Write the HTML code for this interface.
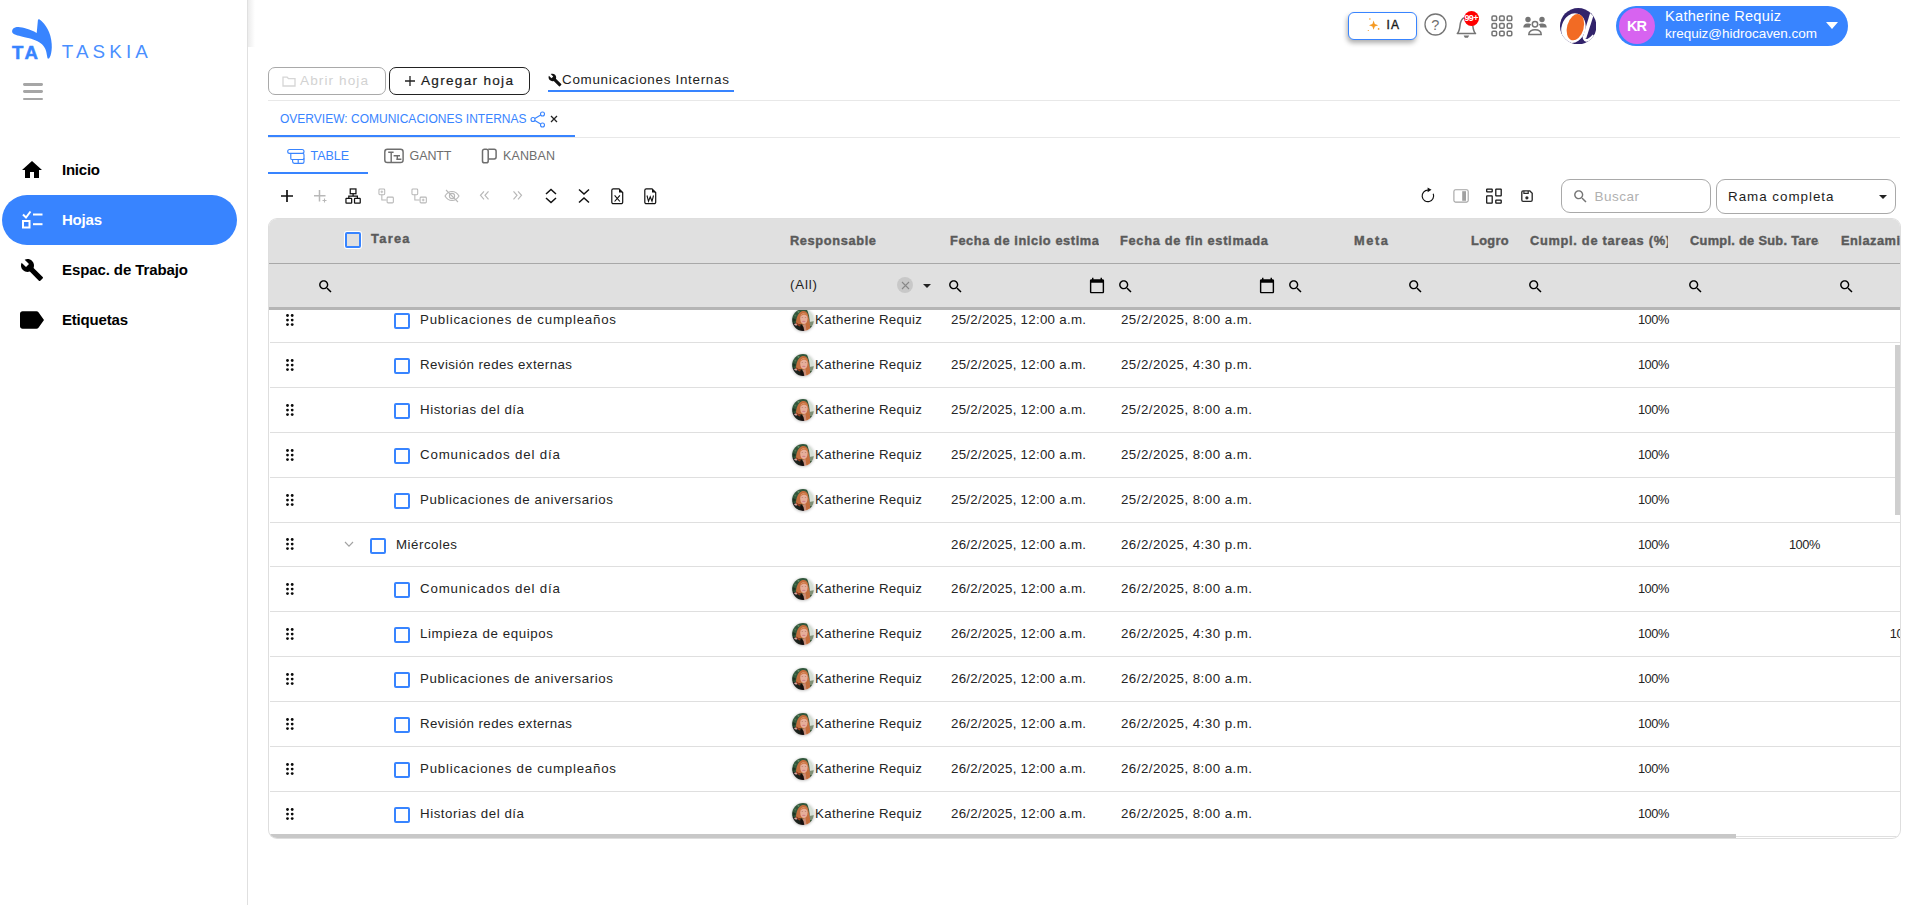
<!DOCTYPE html>
<html lang="es"><head><meta charset="utf-8"><title>Taskia</title>
<style>
html,body{margin:0;padding:0;}
body{width:1919px;height:905px;position:relative;overflow:hidden;background:#fff;font-family:"Liberation Sans",sans-serif;}
.a{position:absolute;display:block;}
.t{position:absolute;white-space:pre;font-family:"Liberation Sans",sans-serif;}
.b{position:absolute;box-sizing:border-box;}

</style></head>
<body>
<div class="b" style="left:0;top:0;width:248px;height:905px;background:#fff;border-right:1px solid #e0e0e0;"></div>
<div class="b" style="left:248px;top:0;width:7px;height:47px;background:linear-gradient(to right,#ececec,#fff)"></div>
<svg class="a" style="left:0.00px;top:0.00px;" width="64" height="64" viewBox="0 0 64 64"><path d="M12.1 31.5 C12.1 28.5 15 27 18.3 27.1 C23 27.2 30 29.5 36.7 32.9 L37.9 20.3 C38 19.2 38.8 19 39.600 19.5 C44 22.5 47.5 28 49.2 32.5 C51 37 52 43 51.8 47.5 C51.6 52 50.8 55.5 50 56.7 C49.5 58 48.8 58.8 48 58.6 C47.3 58.300 47 55 46.25 51.7 C45.5 49 44.5 47.5 43.3 45.8 C41.5 43.5 40 42.5 37.5 41.25 C34 39.7 32 39.2 29.2 38.3 C26 37.4 23 36.9 20.8 36.25 C18.5 35.7 16.5 35.3 15 34.6 C13.3 33.8 12.1 33 12.1 31.5 Z" fill="#3884ff"/></svg>
<span class="t " style="top:41.74px;font-size:18.6px;line-height:22.32px;color:#3884ff;left:12.10px;font-weight:700;letter-spacing:2.386px;-webkit-text-stroke:0.5px #3884ff;">TA</span>
<span class="t " style="top:41.42px;font-size:18.8px;line-height:22.56px;color:#4a8fff;left:61.80px;letter-spacing:4.106px;">TASKIA</span>
<div class="b" style="left:23px;top:83.2px;width:20px;height:2.900px;background:#a6a6a6;border-radius:1.45px"></div>
<div class="b" style="left:23px;top:90.35px;width:20px;height:2.900px;background:#a6a6a6;border-radius:1.45px"></div>
<div class="b" style="left:23px;top:97.5px;width:20px;height:2.900px;background:#a6a6a6;border-radius:1.45px"></div>
<div class="b" style="left:2px;top:195px;width:235px;height:50px;background:#3884ff;border-radius:25px"></div>
<svg class="a" style="left:20.00px;top:158.00px;" width="24" height="24" viewBox="0 0 24 24"><path d="M10 20v-6h4v6h5v-8h3L12 3 2 12h3v8z" fill="#000"/></svg>
<span class="t " style="top:161.00px;font-size:15px;line-height:18.00px;color:#000;left:62.00px;font-weight:700;letter-spacing:-0.234px;">Inicio</span>
<svg class="a" style="left:21.00px;top:208.00px;" width="22" height="22" viewBox="0 0 22 22"><path d="M2 6.5 L5 9.5 L9.5 3.5" fill="none" stroke="#fff" stroke-width="2"/><rect x="2" y="13" width="6.5" height="6.5" fill="none" stroke="#fff" stroke-width="2"/><rect x="12" y="5.5" width="9.5" height="2" fill="#fff"/><rect x="12" y="15.2" width="9.5" height="2" fill="#fff"/></svg>
<span class="t " style="top:211.00px;font-size:15px;line-height:18.00px;color:#fff;left:62.00px;font-weight:700;letter-spacing:-0.212px;">Hojas</span>
<svg class="a" style="left:20.00px;top:258.00px;" width="24" height="24" viewBox="0 0 24 24"><path d="M22.7 19l-9.1-9.1c.9-2.3.4-5-1.5-6.9-2-2-5-2.4-7.4-1.3L9 6 6 9 1.6 4.7C.4 7.1.9 10.1 2.9 12.1c1.9 1.9 4.6 2.4 6.9 1.5l9.1 9.1c.4.4 1 .4 1.4 0l2.3-2.3c.5-.4.5-1.1.1-1.4z" fill="#000"/></svg>
<span class="t " style="top:261.00px;font-size:15px;line-height:18.00px;color:#000;left:62.00px;font-weight:700;letter-spacing:-0.097px;">Espac. de Trabajo</span>
<svg class="a" style="left:19.90px;top:311.00px;" width="24" height="18" viewBox="3 5 19 14"><path d="M17.63 5.84C17.27 5.33 16.67 5 16 5L5 5.01C3.9 5.01 3 5.9 3 7v10c0 1.1.9 1.99 2 1.99L16 19c.67 0 1.27-.33 1.63-.84L22 12l-4.37-6.16z" fill="#000"/></svg>
<span class="t " style="top:311.00px;font-size:15px;line-height:18.00px;color:#000;left:62.00px;font-weight:700;letter-spacing:-0.189px;">Etiquetas</span>
<div class="b" style="left:1348.3px;top:12px;width:68.5px;height:27.5px;border:1.5px solid #3884ff;border-radius:6px;background:#fff;box-shadow:-1px 3px 5px rgba(0,0,0,.32)"></div>
<svg class="a" style="left:1366.00px;top:17.00px;" width="15" height="16" viewBox="0 0 15 16"><path d="M7.6 3.600 L8.8 7 L12.200 8.2 L8.8 9.4 L7.6 12.8 L6.4 9.4 L3 8.2 L6.4 7 Z" fill="#f59a23"/><circle cx="3.900" cy="1.900" r=".75" fill="#f59a23"/><circle cx="12.6" cy="11.900" r=".85" fill="#f59a23"/><circle cx="2.3" cy="13.500" r=".6" fill="#f59a23"/></svg>
<span class="t " style="top:18.30px;font-size:12px;line-height:14.40px;color:#1a1a1a;left:1386.60px;letter-spacing:0.962px;-webkit-text-stroke:0.35px #1a1a1a;">IA</span>
<svg class="a" style="left:1423.90px;top:13.20px;" width="23" height="23" viewBox="0 0 23 23"><circle cx="11.500" cy="11.5" r="10.5" fill="none" stroke="#757575" stroke-width="1.3"/></svg>
<span class="t " style="top:16.50px;font-size:14.5px;line-height:17.40px;color:#707070;left:1431.30px;">?</span>
<svg class="a" style="left:1455.00px;top:14.00px;" width="24" height="26" viewBox="0 0 24 26"><path d="M2.300 19.6 C5.2 16.5 4.6 12 5.5 8.800 C6.3 5.8 8.3 3.300 11.4 3.300 C14.500 3.3 16.500 5.800 17.300 8.8 C18.200 12 17.600 16.5 20.500 19.600 Z" fill="none" stroke="#757575" stroke-width="1.5" stroke-linejoin="round"/><path d="M8.6 21.600 h5.600 l-1.300 2.200 h-3 z" fill="#757575"/></svg>
<div class="b" style="left:1464px;top:11px;width:15px;height:15px;border-radius:50%;background:#f00"></div>
<span class="t " style="top:12.60px;font-size:9px;line-height:10.80px;color:#fff;left:1464.50px;font-weight:700;letter-spacing:-0.633px;">99+</span>
<svg class="a" style="left:1490.50px;top:14.50px;" width="22" height="22" viewBox="0 0 22 22"><rect x="1.0" y="1.0" width="4.6" height="4.6" rx="1.2" fill="none" stroke="#757575" stroke-width="1.5"/><rect x="8.6" y="1.0" width="4.6" height="4.6" rx="1.2" fill="none" stroke="#757575" stroke-width="1.5"/><rect x="16.2" y="1.0" width="4.6" height="4.6" rx="1.2" fill="none" stroke="#757575" stroke-width="1.5"/><rect x="1.0" y="8.6" width="4.6" height="4.6" rx="1.2" fill="none" stroke="#757575" stroke-width="1.5"/><rect x="8.6" y="8.6" width="4.6" height="4.6" rx="1.2" fill="none" stroke="#757575" stroke-width="1.5"/><rect x="16.2" y="8.6" width="4.6" height="4.6" rx="1.2" fill="none" stroke="#757575" stroke-width="1.5"/><rect x="1.0" y="16.2" width="4.6" height="4.6" rx="1.2" fill="none" stroke="#757575" stroke-width="1.5"/><rect x="8.6" y="16.2" width="4.6" height="4.6" rx="1.2" fill="none" stroke="#757575" stroke-width="1.5"/><rect x="16.2" y="16.2" width="4.6" height="4.6" rx="1.2" fill="none" stroke="#757575" stroke-width="1.5"/></svg>
<svg class="a" style="left:1522.00px;top:14.00px;" width="26" height="23" viewBox="0 0 26 23"><circle cx="6" cy="5.5" r="2.700" fill="#757575"/><circle cx="20" cy="5.5" r="2.700" fill="#757575"/><path d="M1.300 13.5 C1.3 10.500 3.5 9.6 6 9.6 C7.500 9.6 8.600 10 9.2 10.6 C8.200 11.400 7.8 12.5 7.8 13.5 Z" fill="#757575"/><path d="M24.700 13.5 C24.7 10.500 22.5 9.600 20 9.6 C18.500 9.6 17.400 10 16.800 10.6 C17.800 11.400 18.200 12.5 18.2 13.5 Z" fill="#757575"/><circle cx="13" cy="10.300" r="2.700" fill="none" stroke="#757575" stroke-width="1.5"/><path d="M6.800 20.500 C6.800 17 10 15.700 13 15.700 C16 15.700 19.200 17 19.200 20.500 Z" fill="none" stroke="#757575" stroke-width="1.5"/></svg>
<svg class="a" style="left:1559.80px;top:7.80px;" width="36.4" height="36.4" viewBox="0 0 36 36"><defs><clipPath id="cc"><circle cx="18" cy="18" r="18"/></clipPath></defs><g clip-path="url(#cc)"><rect width="36" height="36" fill="#32236b"/><ellipse cx="13.300" cy="19.900" rx="11.800" ry="14.900" transform="rotate(17 13.3 19.9)" fill="#fff"/><path d="M29.800 5 L33 7.800 L25.800 30.400 L22.800 28 Z" fill="#fff"/><path d="M23.4 27.500 C23.6 31.5 25.5 33.200 28.500 31.3 C30.5 30 32 28.6 33.4 27" fill="none" stroke="#fff" stroke-width="2.6"/><ellipse cx="15.2" cy="18.95" rx="8.2" ry="13.35" transform="rotate(15.6 15.2 18.95)" fill="#f26b24"/></g></svg>
<div class="b" style="left:1616px;top:5.800px;width:232px;height:40px;border-radius:20px;background:#3884ff"></div>
<div class="b" style="left:1619px;top:8px;width:36px;height:36px;border-radius:50%;background:#d763f0"></div>
<span class="t " style="top:17.80px;font-size:14.5px;line-height:17.40px;color:#fff;left:1627.00px;font-weight:700;letter-spacing:-0.943px;">KR</span>
<span class="t " style="top:8.34px;font-size:14.6px;line-height:17.52px;color:#fff;left:1665.00px;letter-spacing:0.266px;">Katherine Requiz</span>
<span class="t " style="top:25.90px;font-size:13.5px;line-height:16.20px;color:#fff;left:1665.00px;letter-spacing:-0.025px;">krequiz@hidrocaven.com</span>
<svg class="a" style="left:1826.00px;top:22.00px;" width="12" height="7" viewBox="0 0 12 7"><path d="M0 0 L12 0 L6 7 Z" fill="#fff"/></svg>
<div class="b" style="left:268px;top:67px;width:118px;height:28px;border:1px solid #a9a9a9;border-radius:7px;background:#fff"></div>
<svg class="a" style="left:282.00px;top:75.00px;" width="14" height="12" viewBox="0 0 14 12"><path d="M1 2.2 h4.2 l1.3 1.5 h6.5 v7.3 h-12 z" fill="none" stroke="#d6d6d6" stroke-width="1.3"/></svg>
<span class="t " style="top:72.84px;font-size:13.6px;line-height:16.32px;color:#d2d2d2;left:300.00px;letter-spacing:1.088px;">Abrir hoja</span>
<div class="b" style="left:389px;top:67px;width:141px;height:28px;border:1px solid #222;border-radius:7px;background:#fff"></div>
<svg class="a" style="left:404.00px;top:75.00px;" width="12" height="12" viewBox="0 0 12 12"><path d="M6 1 v10 M1 6 h10" stroke="#222" stroke-width="1.3" fill="none"/></svg>
<span class="t " style="top:72.84px;font-size:13.6px;line-height:16.32px;color:#1c1c1c;left:421.00px;letter-spacing:1.284px;-webkit-text-stroke:0.2px #1c1c1c;">Agregar hoja</span>
<svg class="a" style="left:548.00px;top:73.00px;" width="14" height="14" viewBox="0 0 24 24"><path d="M22.7 19l-9.1-9.1c.9-2.3.4-5-1.5-6.9-2-2-5-2.4-7.4-1.3L9 6 6 9 1.6 4.7C.4 7.1.9 10.1 2.9 12.1c1.9 1.9 4.6 2.4 6.9 1.5l9.1 9.1c.4.4 1 .4 1.4 0l2.3-2.3c.5-.4.5-1.1.1-1.4z" fill="#111"/></svg>
<span class="t " style="top:71.56px;font-size:13.4px;line-height:16.08px;color:#222;left:562.00px;letter-spacing:0.718px;">Comunicaciones Internas</span>
<div class="b" style="left:548px;top:90px;width:186px;height:2px;background:#3884ff"></div>
<div class="b" style="left:268px;top:100px;width:1632px;height:1px;background:#e8e8e8"></div>
<span class="t " style="top:112.30px;font-size:12px;line-height:14.40px;color:#3884ff;left:280.00px;letter-spacing:0.008px;">OVERVIEW: COMUNICACIONES INTERNAS</span>
<svg class="a" style="left:529.10px;top:109.50px;" width="18" height="18" viewBox="0 0 18 18"><circle cx="13.5" cy="4" r="2" fill="none" stroke="#3884ff" stroke-width="1.1"/><circle cx="4" cy="9.5" r="2" fill="none" stroke="#3884ff" stroke-width="1.1"/><circle cx="13.5" cy="15" r="2" fill="none" stroke="#3884ff" stroke-width="1.1"/><path d="M5.8 8.5 L11.7 5 M5.8 10.5 L11.7 14" stroke="#3884ff" stroke-width="1.1"/></svg>
<svg class="a" style="left:550.40px;top:115.00px;" width="8" height="8" viewBox="0 0 8 8"><path d="M1 1 L7 7 M7 1 L1 7" stroke="#222" stroke-width="1.3"/></svg>
<div class="b" style="left:268px;top:137px;width:1632px;height:1px;background:#e8e8e8"></div>
<div class="b" style="left:268px;top:135px;width:307px;height:2px;background:#3884ff"></div>
<svg class="a" style="left:285.00px;top:146.00px;" width="22" height="20" viewBox="0 0 22 20"><rect x="2.70" y="3.50" width="16.3" height="3.9" rx="1.95" fill="none" stroke="#3884ff" stroke-width="1.15"/><path d="M5.80 7.40 V159.3 h0" fill="none"/><path d="M5.80 7.40 L5.80 12.40 Q5.80 13.50 7.00 13.50 L17.60 13.50 Q19.00 13.50 19.00 12.20 L19.00 8.80 Q19.00 7.40 17.60 7.40" fill="none" stroke="#3884ff" stroke-width="1.15"/><path d="M7.60 13.50 L7.60 15.60 Q7.60 17.30 9.30 17.30 L17.40 17.30 Q19.00 17.30 19.00 15.70 L19.00 12.20 M13.20 13.50 L13.20 17.30" fill="none" stroke="#3884ff" stroke-width="1.15"/></svg>
<span class="t " style="top:148.50px;font-size:12.5px;line-height:15.00px;color:#3884ff;left:310.50px;letter-spacing:-0.043px;">TABLE</span>
<div class="b" style="left:268px;top:171.6px;width:100px;height:2.300px;background:#3884ff"></div>
<svg class="a" style="left:382.00px;top:146.00px;" width="24" height="20" viewBox="0 0 24 20"><rect x="2.80" y="3.30" width="18.3" height="13.2" rx="2.6" fill="none" stroke="#6e6e6e" stroke-width="1.45"/><path d="M9.20 6.00 V16.5 M6.20 6.20 H11.60 M11.60 9.70 H18 M15.30 9.70 V13.30 M14.30 13.30 H19.40" fill="none" stroke="#6e6e6e" stroke-width="1.4"/></svg>
<span class="t " style="top:148.50px;font-size:12.5px;line-height:15.00px;color:#6e6e6e;left:409.50px;letter-spacing:-0.090px;">GANTT</span>
<svg class="a" style="left:480.00px;top:146.00px;" width="20" height="20" viewBox="0 0 20 20"><rect x="2.50" y="3.30" width="5.700" height="13.500" rx="1.900" fill="none" stroke="#6e6e6e" stroke-width="1.5"/><path d="M8.20 3.30 H14.20 a1.900 1.900 0 0 1 1.900 1.900 v5.800 a1.900 1.900 0 0 1 -1.900 1.900 H8.20" fill="none" stroke="#6e6e6e" stroke-width="1.5"/></svg>
<span class="t " style="top:148.50px;font-size:12.5px;line-height:15.00px;color:#6e6e6e;left:503.00px;letter-spacing:0.119px;">KANBAN</span>
<svg class="a" style="left:280.00px;top:189.00px;" width="14" height="14" viewBox="0 0 14 14"><path d="M7 1 v12 M1 7 h12" stroke="#111" stroke-width="1.7" fill="none"/></svg>
<svg class="a" style="left:313.00px;top:189.00px;" width="15" height="15" viewBox="0 0 15 15"><path d="M6.5 1 v11.500 M1 6.700 h11.500" stroke="#b8b8b8" stroke-width="1.5" fill="none"/><path d="M11.5 9.5 v4 M9.5 11.5 h4" stroke="#b8b8b8" stroke-width="1.1"/></svg>
<svg class="a" style="left:344.70px;top:187.80px;" width="16.2" height="16.2" viewBox="0 0 17 17"><rect x="5.5" y="1" width="6" height="5" fill="none" stroke="#111" stroke-width="1.3"/><rect x="1" y="11" width="6" height="5" rx=".5" fill="none" stroke="#111" stroke-width="1.3"/><rect x="10" y="11" width="6" height="5" rx=".5" fill="none" stroke="#111" stroke-width="1.3"/><path d="M8.5 6 v2.5 M4 11 v-2.5 h9 v2.5" fill="none" stroke="#111" stroke-width="1.3"/></svg>
<svg class="a" style="left:378.00px;top:188.00px;" width="16.3" height="16.3" viewBox="0 0 17 17"><rect x="1" y="1" width="6" height="6" rx="1" fill="none" stroke="#b8b8b8" stroke-width="1.1"/><path d="M4 2.6 v2.8 M2.6 4 h2.8" stroke="#b8b8b8" stroke-width="1"/><path d="M4 7 v5.5 h5" fill="none" stroke="#b8b8b8" stroke-width="1.1"/><rect x="9.5" y="9.5" width="6.5" height="6" rx="1" fill="none" stroke="#b8b8b8" stroke-width="1.1"/></svg>
<svg class="a" style="left:411.00px;top:188.00px;" width="16.3" height="16.3" viewBox="0 0 17 17"><rect x="1" y="1" width="6" height="6" rx="1" fill="none" stroke="#b8b8b8" stroke-width="1.1"/><path d="M12.7 11.1 v2.8 M11.3 12.5 h2.8" stroke="#b8b8b8" stroke-width="1"/><path d="M4 7 v5.5 h5" fill="none" stroke="#b8b8b8" stroke-width="1.1"/><rect x="9.5" y="9.5" width="6.5" height="6" rx="1" fill="none" stroke="#b8b8b8" stroke-width="1.1"/></svg>
<svg class="a" style="left:444.00px;top:189.00px;" width="16" height="14" viewBox="0 0 16 14"><path d="M1 7 C3 3.5 5.5 2.5 8 2.5 C10.5 2.5 13 3.5 15 7 C13 10.5 10.5 11.5 8 11.5 C5.5 11.5 3 10.5 1 7 Z" fill="none" stroke="#b8b8b8" stroke-width="1.1"/><circle cx="8" cy="7" r="2.6" fill="none" stroke="#b8b8b8" stroke-width="1.1"/><path d="M2 1 L14 13" stroke="#b8b8b8" stroke-width="1.1"/></svg>
<svg class="a" style="left:479.00px;top:190.40px;" width="11" height="10.6" viewBox="0 0 11 10"><path d="M5 1 L1.5 5 L5 9 M9.5 1 L6 5 L9.5 9" fill="none" stroke="#b8b8b8" stroke-width="1.2"/></svg>
<svg class="a" style="left:512.00px;top:190.40px;" width="11" height="10.6" viewBox="0 0 11 10"><path d="M1.5 1 L5 5 L1.5 9 M6 1 L9.5 5 L6 9" fill="none" stroke="#b8b8b8" stroke-width="1.2"/></svg>
<svg class="a" style="left:544.00px;top:187.80px;" width="14" height="16" viewBox="0 0 14 16"><path d="M2 6 L7 1.5 L12 6 M2 10 L7 14.5 L12 10" fill="none" stroke="#111" stroke-width="1.5"/></svg>
<svg class="a" style="left:577.00px;top:187.60px;" width="14" height="16" viewBox="0 0 14 16"><path d="M2 1.5 L7 6 L12 1.5 M2 14.5 L7 10 L12 14.5" fill="none" stroke="#111" stroke-width="1.5"/></svg>
<svg class="a" style="left:610.60px;top:187.50px;" width="13" height="17" viewBox="0 0 13 17"><path d="M2.300 .8 h5.700 l3.700 3.700 v9.700 a1.500 1.500 0 0 1 -1.500 1.500 h-7.900 a1.500 1.500 0 0 1 -1.500 -1.500 v-11.900 a1.500 1.500 0 0 1 1.500 -1.500 z" fill="none" stroke="#111" stroke-width="1.2"/><path d="M8 .8 v3.700 h3.700 z" fill="#111"/><path d="M3.600 7.300 L8.900 13.500 M8.900 7.300 L3.600 13.500" stroke="#111" stroke-width="1.15"/></svg>
<svg class="a" style="left:644.30px;top:187.50px;" width="13" height="17" viewBox="0 0 13 17"><path d="M2.300 .8 h5.700 l3.700 3.700 v9.700 a1.500 1.500 0 0 1 -1.500 1.500 h-7.900 a1.500 1.500 0 0 1 -1.500 -1.500 v-11.900 a1.500 1.500 0 0 1 1.500 -1.500 z" fill="none" stroke="#111" stroke-width="1.2"/><path d="M8 .8 v3.700 h3.700 z" fill="#111"/><path d="M3 7.500 L4.500 13.300 L6.250 8.800 L8 13.300 L9.500 7.500" fill="none" stroke="#111" stroke-width="1.1"/></svg>
<svg class="a" style="left:1415.00px;top:183.00px;" width="125" height="27" viewBox="0 0 125 27"><path d="M12.90 7.15 A5.75 5.75 0 1 0 18.23 10.75" fill="none" stroke="#111" stroke-width="1.15"/><path d="M12.60 4.50 L16.50 6.85 L12.60 9.20 Z" fill="#111"/><rect x="38.90000000000009" y="6.80" width="14.3" height="12.3" rx="1.6" fill="none" stroke="#a3a3a3" stroke-width="1.1"/><rect x="47.20" y="8.20" width="3.8" height="9.6" fill="#a0a0a0"/><rect x="71.70" y="6.00" width="5.50" height="2.90" rx=".35" fill="none" stroke="#111" stroke-width="1.25"/><rect x="71.70" y="12.90" width="5.50" height="7.20" rx=".35" fill="none" stroke="#111" stroke-width="1.25"/><rect x="80.80" y="6.00" width="5.40" height="6.80" rx=".35" fill="none" stroke="#111" stroke-width="1.25"/><rect x="80.80" y="17.10" width="5.40" height="3.00" rx=".35" fill="none" stroke="#111" stroke-width="1.25"/><path d="M106.80 9.20 a1.3 1.3 0 0 1 1.3 -1.3 h6.8 l2.300 2.300 v6.800 a1.300 1.3 0 0 1 -1.300 1.300 h-7.800 a1.300 1.3 0 0 1 -1.300 -1.300 z" fill="none" stroke="#2a2a2a" stroke-width="1.35"/><path d="M108.90 7.90 v2.400 h4.300 v-2.400" fill="none" stroke="#2a2a2a" stroke-width="1.2"/><circle cx="111.90" cy="14.80" r="1.6" fill="#2a2a2a"/></svg>
<div class="b" style="left:1561px;top:179px;width:150px;height:34px;border:1px solid #a9a9a9;border-radius:9px;background:#fff"></div>
<svg class="a" style="left:1572.30px;top:188.00px;" width="17" height="17" viewBox="0 0 24 24"><path d="M15.5 14h-.79l-.28-.27C15.41 12.59 16 11.11 16 9.5 16 5.91 13.09 3 9.5 3S3 5.910 3 9.5 5.91 16 9.5 16c1.61 0 3.09-.59 4.23-1.57l.27.28v.79l5 4.99L20.49 19l-4.99-5zm-6 0C7.01 14 5 11.99 5 9.5S7.01 5 9.5 5 14 7.01 14 9.5 11.990 14 9.5 14z" fill="#757575"/></svg>
<span class="t " style="top:188.60px;font-size:13.5px;line-height:16.20px;color:#b0b0b0;left:1594.50px;letter-spacing:0.497px;">Buscar</span>
<div class="b" style="left:1716px;top:179px;width:180px;height:35px;border:1px solid #a9a9a9;border-radius:9px;background:#fff"></div>
<span class="t " style="top:188.76px;font-size:13.4px;line-height:16.08px;color:#1e1e1e;left:1728.00px;letter-spacing:0.972px;">Rama completa</span>
<svg class="a" style="left:1879.00px;top:195.00px;" width="8" height="4" viewBox="0 0 8 4"><path d="M0 0 h8 l-4 4 z" fill="#222"/></svg>
<div class="b" style="left:269px;top:219px;width:1631px;height:619px;border-radius:8px;background:#fff;box-shadow:0 0 0 1px #dedede;overflow:hidden" id="tbl">
<svg width="0" height="0" style="position:absolute"><defs><clipPath id="avc"><circle cx="11" cy="11" r="10.9"/></clipPath><filter id="avb" x="-10%" y="-10%" width="120%" height="120%"><feGaussianBlur stdDeviation="0.45"/></filter><g id="avatar"><g clip-path="url(#avc)"><g filter="url(#avb)"><rect x="-2" y="-2" width="26" height="26" fill="#33573a"/><path d="M-1 6 L6 -1 L-1 -1 Z" fill="#1c3523"/><path d="M0 9 C2 8 3 11 2 14 L-1 14 Z" fill="#213b28"/><circle cx="6.500" cy="2.800" r="1.100" fill="#5f8a66"/><circle cx="3.300" cy="6.500" r="1" fill="#4a7552"/><circle cx="2.500" cy="11" r="1.200" fill="#1b3021"/><path d="M14 -1 L23 -1 L23 15 L17.500 15 C18 9 17 4 14 -1 Z" fill="#d6dfd6"/><path d="M17 13 L23 12 L23 17 L18 17 Z" fill="#7e8f74"/><path d="M-1 14 C3 13.500 8 14.500 11 17.500 L14 23 L-1 23 Z" fill="#1b211e"/><path d="M2 15 C3.5 14 5 14.500 5.500 16 C4.500 17 3 16.800 2 15 Z" fill="#d9a7a4"/><path d="M3.900 14.800 C4.200 9 5.800 4 9.800 2.200 C13 1.300 15.600 3 16.300 7 C17 11 18.300 15 18.300 19.500 L16 22 L13.500 22 L12 16 L8 15 L5.500 15.800 Z" fill="#c46d3c"/><path d="M4.200 13 C5 14 7 15.500 9 15.800 L8 17.500 C6 17 4.500 15.500 4.200 13 Z" fill="#8c3a1e"/><path d="M10.500 16 L13.500 15 L14.500 22 L11.500 22 Z" fill="#c98d78"/><path d="M9 15 L11.500 18 L12.500 23 L8 23 Z" fill="#14110f"/><ellipse cx="11.900" cy="9.500" rx="3.700" ry="5.500" fill="#e6ae9a"/><path d="M8.300 8 C9 5.200 11 4 13.300 4.300 C15 4.600 15.800 6.500 15.700 8.500 C15 6.500 13.800 5.600 12 5.700 C10.300 5.800 9 6.800 8.300 8 Z" fill="#cf7a47"/><ellipse cx="11.800" cy="12.400" rx="1.700" ry=".7" fill="#d2808a"/><ellipse cx="10.300" cy="8.700" rx=".8" ry=".4" fill="#a87562"/><ellipse cx="13.500" cy="8.700" rx=".8" ry=".4" fill="#a87562"/></g></g></g></defs></svg>
<div class="b" style="left:1px;top:122.90px;width:1631px;height:1px;background:#dfdfdf"></div>
<svg class="a" style="left:17.26px;top:94.70px;" width="7.7" height="12.1" viewBox="0 0 7.7 12.1"><circle cx="1.50" cy="1.50" r="1.4" fill="#0a0a0a"/><circle cx="6.20" cy="1.50" r="1.4" fill="#0a0a0a"/><circle cx="1.50" cy="6.05" r="1.4" fill="#0a0a0a"/><circle cx="6.20" cy="6.05" r="1.4" fill="#0a0a0a"/><circle cx="1.50" cy="10.60" r="1.4" fill="#0a0a0a"/><circle cx="6.20" cy="10.60" r="1.4" fill="#0a0a0a"/></svg>
<div class="b" style="left:125px;top:94.00px;width:16px;height:16px;border:2px solid #3884ff;border-radius:2px;background:#fff"></div>
<span class="t" style="top:93.16px;font-size:13.3px;line-height:15.96px;color:#242424;left:151.00px;letter-spacing:0.771px;">Publicaciones de cumpleaños</span>
<div class="b" style="left:523px;top:90.30px;width:22px;height:22px;border-radius:50%;box-shadow:0 0.5px 3px rgba(0,0,0,.3)"></div>
<svg class="a" style="left:523.00px;top:90.30px;" width="22" height="22" viewBox="0 0 22 22"><use href="#avatar"/></svg>
<span class="t" style="top:93.16px;font-size:13.3px;line-height:15.96px;color:#242424;left:546.00px;letter-spacing:0.331px;">Katherine Requiz</span>
<span class="t" style="top:93.16px;font-size:13.3px;line-height:15.96px;color:#242424;left:682.00px;letter-spacing:0.280px;">25/2/2025, 12:00 a.m.</span>
<span class="t" style="top:93.16px;font-size:13.3px;line-height:15.96px;color:#242424;left:852.00px;letter-spacing:0.473px;">25/2/2025, 8:00 a.m.</span>
<span class="t" style="top:93.13px;font-size:12.8px;line-height:15.36px;color:#242424;right:231.20px;letter-spacing:-0.479px;">100%</span>
<div class="b" style="left:1px;top:167.90px;width:1631px;height:1px;background:#dfdfdf"></div>
<svg class="a" style="left:17.26px;top:139.70px;" width="7.7" height="12.1" viewBox="0 0 7.7 12.1"><circle cx="1.50" cy="1.50" r="1.4" fill="#0a0a0a"/><circle cx="6.20" cy="1.50" r="1.4" fill="#0a0a0a"/><circle cx="1.50" cy="6.05" r="1.4" fill="#0a0a0a"/><circle cx="6.20" cy="6.05" r="1.4" fill="#0a0a0a"/><circle cx="1.50" cy="10.60" r="1.4" fill="#0a0a0a"/><circle cx="6.20" cy="10.60" r="1.4" fill="#0a0a0a"/></svg>
<div class="b" style="left:125px;top:139.00px;width:16px;height:16px;border:2px solid #3884ff;border-radius:2px;background:#fff"></div>
<span class="t" style="top:138.16px;font-size:13.3px;line-height:15.96px;color:#242424;left:151.00px;letter-spacing:0.424px;">Revisión redes externas</span>
<div class="b" style="left:523px;top:135.30px;width:22px;height:22px;border-radius:50%;box-shadow:0 0.5px 3px rgba(0,0,0,.3)"></div>
<svg class="a" style="left:523.00px;top:135.30px;" width="22" height="22" viewBox="0 0 22 22"><use href="#avatar"/></svg>
<span class="t" style="top:138.16px;font-size:13.3px;line-height:15.96px;color:#242424;left:546.00px;letter-spacing:0.331px;">Katherine Requiz</span>
<span class="t" style="top:138.16px;font-size:13.3px;line-height:15.96px;color:#242424;left:682.00px;letter-spacing:0.280px;">25/2/2025, 12:00 a.m.</span>
<span class="t" style="top:138.16px;font-size:13.3px;line-height:15.96px;color:#242424;left:852.00px;letter-spacing:0.473px;">25/2/2025, 4:30 p.m.</span>
<span class="t" style="top:138.13px;font-size:12.8px;line-height:15.36px;color:#242424;right:231.20px;letter-spacing:-0.479px;">100%</span>
<div class="b" style="left:1px;top:212.90px;width:1631px;height:1px;background:#dfdfdf"></div>
<svg class="a" style="left:17.26px;top:184.70px;" width="7.7" height="12.1" viewBox="0 0 7.7 12.1"><circle cx="1.50" cy="1.50" r="1.4" fill="#0a0a0a"/><circle cx="6.20" cy="1.50" r="1.4" fill="#0a0a0a"/><circle cx="1.50" cy="6.05" r="1.4" fill="#0a0a0a"/><circle cx="6.20" cy="6.05" r="1.4" fill="#0a0a0a"/><circle cx="1.50" cy="10.60" r="1.4" fill="#0a0a0a"/><circle cx="6.20" cy="10.60" r="1.4" fill="#0a0a0a"/></svg>
<div class="b" style="left:125px;top:184.00px;width:16px;height:16px;border:2px solid #3884ff;border-radius:2px;background:#fff"></div>
<span class="t" style="top:183.16px;font-size:13.3px;line-height:15.96px;color:#242424;left:151.00px;letter-spacing:0.540px;">Historias del día</span>
<div class="b" style="left:523px;top:180.30px;width:22px;height:22px;border-radius:50%;box-shadow:0 0.5px 3px rgba(0,0,0,.3)"></div>
<svg class="a" style="left:523.00px;top:180.30px;" width="22" height="22" viewBox="0 0 22 22"><use href="#avatar"/></svg>
<span class="t" style="top:183.16px;font-size:13.3px;line-height:15.96px;color:#242424;left:546.00px;letter-spacing:0.331px;">Katherine Requiz</span>
<span class="t" style="top:183.16px;font-size:13.3px;line-height:15.96px;color:#242424;left:682.00px;letter-spacing:0.280px;">25/2/2025, 12:00 a.m.</span>
<span class="t" style="top:183.16px;font-size:13.3px;line-height:15.96px;color:#242424;left:852.00px;letter-spacing:0.473px;">25/2/2025, 8:00 a.m.</span>
<span class="t" style="top:183.13px;font-size:12.8px;line-height:15.36px;color:#242424;right:231.20px;letter-spacing:-0.479px;">100%</span>
<div class="b" style="left:1px;top:257.90px;width:1631px;height:1px;background:#dfdfdf"></div>
<svg class="a" style="left:17.26px;top:229.70px;" width="7.7" height="12.1" viewBox="0 0 7.7 12.1"><circle cx="1.50" cy="1.50" r="1.4" fill="#0a0a0a"/><circle cx="6.20" cy="1.50" r="1.4" fill="#0a0a0a"/><circle cx="1.50" cy="6.05" r="1.4" fill="#0a0a0a"/><circle cx="6.20" cy="6.05" r="1.4" fill="#0a0a0a"/><circle cx="1.50" cy="10.60" r="1.4" fill="#0a0a0a"/><circle cx="6.20" cy="10.60" r="1.4" fill="#0a0a0a"/></svg>
<div class="b" style="left:125px;top:229.00px;width:16px;height:16px;border:2px solid #3884ff;border-radius:2px;background:#fff"></div>
<span class="t" style="top:228.16px;font-size:13.3px;line-height:15.96px;color:#242424;left:151.00px;letter-spacing:0.836px;">Comunicados del día</span>
<div class="b" style="left:523px;top:225.30px;width:22px;height:22px;border-radius:50%;box-shadow:0 0.5px 3px rgba(0,0,0,.3)"></div>
<svg class="a" style="left:523.00px;top:225.30px;" width="22" height="22" viewBox="0 0 22 22"><use href="#avatar"/></svg>
<span class="t" style="top:228.16px;font-size:13.3px;line-height:15.96px;color:#242424;left:546.00px;letter-spacing:0.331px;">Katherine Requiz</span>
<span class="t" style="top:228.16px;font-size:13.3px;line-height:15.96px;color:#242424;left:682.00px;letter-spacing:0.280px;">25/2/2025, 12:00 a.m.</span>
<span class="t" style="top:228.16px;font-size:13.3px;line-height:15.96px;color:#242424;left:852.00px;letter-spacing:0.473px;">25/2/2025, 8:00 a.m.</span>
<span class="t" style="top:228.13px;font-size:12.8px;line-height:15.36px;color:#242424;right:231.20px;letter-spacing:-0.479px;">100%</span>
<div class="b" style="left:1px;top:302.90px;width:1631px;height:1px;background:#dfdfdf"></div>
<svg class="a" style="left:17.26px;top:274.70px;" width="7.7" height="12.1" viewBox="0 0 7.7 12.1"><circle cx="1.50" cy="1.50" r="1.4" fill="#0a0a0a"/><circle cx="6.20" cy="1.50" r="1.4" fill="#0a0a0a"/><circle cx="1.50" cy="6.05" r="1.4" fill="#0a0a0a"/><circle cx="6.20" cy="6.05" r="1.4" fill="#0a0a0a"/><circle cx="1.50" cy="10.60" r="1.4" fill="#0a0a0a"/><circle cx="6.20" cy="10.60" r="1.4" fill="#0a0a0a"/></svg>
<div class="b" style="left:125px;top:274.00px;width:16px;height:16px;border:2px solid #3884ff;border-radius:2px;background:#fff"></div>
<span class="t" style="top:273.16px;font-size:13.3px;line-height:15.96px;color:#242424;left:151.00px;letter-spacing:0.609px;">Publicaciones de aniversarios</span>
<div class="b" style="left:523px;top:270.30px;width:22px;height:22px;border-radius:50%;box-shadow:0 0.5px 3px rgba(0,0,0,.3)"></div>
<svg class="a" style="left:523.00px;top:270.30px;" width="22" height="22" viewBox="0 0 22 22"><use href="#avatar"/></svg>
<span class="t" style="top:273.16px;font-size:13.3px;line-height:15.96px;color:#242424;left:546.00px;letter-spacing:0.331px;">Katherine Requiz</span>
<span class="t" style="top:273.16px;font-size:13.3px;line-height:15.96px;color:#242424;left:682.00px;letter-spacing:0.280px;">25/2/2025, 12:00 a.m.</span>
<span class="t" style="top:273.16px;font-size:13.3px;line-height:15.96px;color:#242424;left:852.00px;letter-spacing:0.473px;">25/2/2025, 8:00 a.m.</span>
<span class="t" style="top:273.13px;font-size:12.8px;line-height:15.36px;color:#242424;right:231.20px;letter-spacing:-0.479px;">100%</span>
<div class="b" style="left:1px;top:346.90px;width:1631px;height:1px;background:#dfdfdf"></div>
<svg class="a" style="left:17.26px;top:319.20px;" width="7.7" height="12.1" viewBox="0 0 7.7 12.1"><circle cx="1.50" cy="1.50" r="1.4" fill="#0a0a0a"/><circle cx="6.20" cy="1.50" r="1.4" fill="#0a0a0a"/><circle cx="1.50" cy="6.05" r="1.4" fill="#0a0a0a"/><circle cx="6.20" cy="6.05" r="1.4" fill="#0a0a0a"/><circle cx="1.50" cy="10.60" r="1.4" fill="#0a0a0a"/><circle cx="6.20" cy="10.60" r="1.4" fill="#0a0a0a"/></svg>
<svg class="a" style="left:75.00px;top:321.90px;" width="10" height="7" viewBox="0 0 10 7"><path d="M1 1 L5 5.2 L9 1" fill="none" stroke="#a2a2a2" stroke-width="1.15"/></svg>
<div class="b" style="left:101px;top:319.00px;width:16px;height:16px;border:2px solid #3884ff;border-radius:2px;background:#fff"></div>
<span class="t" style="top:317.66px;font-size:13.3px;line-height:15.96px;color:#242424;left:127.00px;letter-spacing:0.511px;">Miércoles</span>
<span class="t" style="top:317.66px;font-size:13.3px;line-height:15.96px;color:#242424;left:682.00px;letter-spacing:0.280px;">26/2/2025, 12:00 a.m.</span>
<span class="t" style="top:317.66px;font-size:13.3px;line-height:15.96px;color:#242424;left:852.00px;letter-spacing:0.473px;">26/2/2025, 4:30 p.m.</span>
<span class="t" style="top:317.63px;font-size:12.8px;line-height:15.36px;color:#242424;right:231.20px;letter-spacing:-0.479px;">100%</span>
<span class="t" style="top:317.63px;font-size:12.8px;line-height:15.36px;color:#242424;right:80.20px;letter-spacing:-0.479px;">100%</span>
<div class="b" style="left:1px;top:391.90px;width:1631px;height:1px;background:#dfdfdf"></div>
<svg class="a" style="left:17.26px;top:363.70px;" width="7.7" height="12.1" viewBox="0 0 7.7 12.1"><circle cx="1.50" cy="1.50" r="1.4" fill="#0a0a0a"/><circle cx="6.20" cy="1.50" r="1.4" fill="#0a0a0a"/><circle cx="1.50" cy="6.05" r="1.4" fill="#0a0a0a"/><circle cx="6.20" cy="6.05" r="1.4" fill="#0a0a0a"/><circle cx="1.50" cy="10.60" r="1.4" fill="#0a0a0a"/><circle cx="6.20" cy="10.60" r="1.4" fill="#0a0a0a"/></svg>
<div class="b" style="left:125px;top:363.00px;width:16px;height:16px;border:2px solid #3884ff;border-radius:2px;background:#fff"></div>
<span class="t" style="top:362.16px;font-size:13.3px;line-height:15.96px;color:#242424;left:151.00px;letter-spacing:0.836px;">Comunicados del día</span>
<div class="b" style="left:523px;top:359.30px;width:22px;height:22px;border-radius:50%;box-shadow:0 0.5px 3px rgba(0,0,0,.3)"></div>
<svg class="a" style="left:523.00px;top:359.30px;" width="22" height="22" viewBox="0 0 22 22"><use href="#avatar"/></svg>
<span class="t" style="top:362.16px;font-size:13.3px;line-height:15.96px;color:#242424;left:546.00px;letter-spacing:0.331px;">Katherine Requiz</span>
<span class="t" style="top:362.16px;font-size:13.3px;line-height:15.96px;color:#242424;left:682.00px;letter-spacing:0.280px;">26/2/2025, 12:00 a.m.</span>
<span class="t" style="top:362.16px;font-size:13.3px;line-height:15.96px;color:#242424;left:852.00px;letter-spacing:0.473px;">26/2/2025, 8:00 a.m.</span>
<span class="t" style="top:362.13px;font-size:12.8px;line-height:15.36px;color:#242424;right:231.20px;letter-spacing:-0.479px;">100%</span>
<div class="b" style="left:1px;top:436.90px;width:1631px;height:1px;background:#dfdfdf"></div>
<svg class="a" style="left:17.26px;top:408.70px;" width="7.7" height="12.1" viewBox="0 0 7.7 12.1"><circle cx="1.50" cy="1.50" r="1.4" fill="#0a0a0a"/><circle cx="6.20" cy="1.50" r="1.4" fill="#0a0a0a"/><circle cx="1.50" cy="6.05" r="1.4" fill="#0a0a0a"/><circle cx="6.20" cy="6.05" r="1.4" fill="#0a0a0a"/><circle cx="1.50" cy="10.60" r="1.4" fill="#0a0a0a"/><circle cx="6.20" cy="10.60" r="1.4" fill="#0a0a0a"/></svg>
<div class="b" style="left:125px;top:408.00px;width:16px;height:16px;border:2px solid #3884ff;border-radius:2px;background:#fff"></div>
<span class="t" style="top:407.16px;font-size:13.3px;line-height:15.96px;color:#242424;left:151.00px;letter-spacing:0.611px;">Limpieza de equipos</span>
<div class="b" style="left:523px;top:404.30px;width:22px;height:22px;border-radius:50%;box-shadow:0 0.5px 3px rgba(0,0,0,.3)"></div>
<svg class="a" style="left:523.00px;top:404.30px;" width="22" height="22" viewBox="0 0 22 22"><use href="#avatar"/></svg>
<span class="t" style="top:407.16px;font-size:13.3px;line-height:15.96px;color:#242424;left:546.00px;letter-spacing:0.331px;">Katherine Requiz</span>
<span class="t" style="top:407.16px;font-size:13.3px;line-height:15.96px;color:#242424;left:682.00px;letter-spacing:0.280px;">26/2/2025, 12:00 a.m.</span>
<span class="t" style="top:407.16px;font-size:13.3px;line-height:15.96px;color:#242424;left:852.00px;letter-spacing:0.473px;">26/2/2025, 4:30 p.m.</span>
<span class="t" style="top:407.13px;font-size:12.8px;line-height:15.36px;color:#242424;right:231.20px;letter-spacing:-0.479px;">100%</span>
<span class="t" style="top:407.13px;font-size:12.8px;line-height:15.36px;color:#242424;left:1620.80px;letter-spacing:-0.479px;">100%</span>
<div class="b" style="left:1px;top:481.90px;width:1631px;height:1px;background:#dfdfdf"></div>
<svg class="a" style="left:17.26px;top:453.70px;" width="7.7" height="12.1" viewBox="0 0 7.7 12.1"><circle cx="1.50" cy="1.50" r="1.4" fill="#0a0a0a"/><circle cx="6.20" cy="1.50" r="1.4" fill="#0a0a0a"/><circle cx="1.50" cy="6.05" r="1.4" fill="#0a0a0a"/><circle cx="6.20" cy="6.05" r="1.4" fill="#0a0a0a"/><circle cx="1.50" cy="10.60" r="1.4" fill="#0a0a0a"/><circle cx="6.20" cy="10.60" r="1.4" fill="#0a0a0a"/></svg>
<div class="b" style="left:125px;top:453.00px;width:16px;height:16px;border:2px solid #3884ff;border-radius:2px;background:#fff"></div>
<span class="t" style="top:452.16px;font-size:13.3px;line-height:15.96px;color:#242424;left:151.00px;letter-spacing:0.609px;">Publicaciones de aniversarios</span>
<div class="b" style="left:523px;top:449.30px;width:22px;height:22px;border-radius:50%;box-shadow:0 0.5px 3px rgba(0,0,0,.3)"></div>
<svg class="a" style="left:523.00px;top:449.30px;" width="22" height="22" viewBox="0 0 22 22"><use href="#avatar"/></svg>
<span class="t" style="top:452.16px;font-size:13.3px;line-height:15.96px;color:#242424;left:546.00px;letter-spacing:0.331px;">Katherine Requiz</span>
<span class="t" style="top:452.16px;font-size:13.3px;line-height:15.96px;color:#242424;left:682.00px;letter-spacing:0.280px;">26/2/2025, 12:00 a.m.</span>
<span class="t" style="top:452.16px;font-size:13.3px;line-height:15.96px;color:#242424;left:852.00px;letter-spacing:0.473px;">26/2/2025, 8:00 a.m.</span>
<span class="t" style="top:452.13px;font-size:12.8px;line-height:15.36px;color:#242424;right:231.20px;letter-spacing:-0.479px;">100%</span>
<div class="b" style="left:1px;top:526.90px;width:1631px;height:1px;background:#dfdfdf"></div>
<svg class="a" style="left:17.26px;top:498.70px;" width="7.7" height="12.1" viewBox="0 0 7.7 12.1"><circle cx="1.50" cy="1.50" r="1.4" fill="#0a0a0a"/><circle cx="6.20" cy="1.50" r="1.4" fill="#0a0a0a"/><circle cx="1.50" cy="6.05" r="1.4" fill="#0a0a0a"/><circle cx="6.20" cy="6.05" r="1.4" fill="#0a0a0a"/><circle cx="1.50" cy="10.60" r="1.4" fill="#0a0a0a"/><circle cx="6.20" cy="10.60" r="1.4" fill="#0a0a0a"/></svg>
<div class="b" style="left:125px;top:498.00px;width:16px;height:16px;border:2px solid #3884ff;border-radius:2px;background:#fff"></div>
<span class="t" style="top:497.16px;font-size:13.3px;line-height:15.96px;color:#242424;left:151.00px;letter-spacing:0.424px;">Revisión redes externas</span>
<div class="b" style="left:523px;top:494.30px;width:22px;height:22px;border-radius:50%;box-shadow:0 0.5px 3px rgba(0,0,0,.3)"></div>
<svg class="a" style="left:523.00px;top:494.30px;" width="22" height="22" viewBox="0 0 22 22"><use href="#avatar"/></svg>
<span class="t" style="top:497.16px;font-size:13.3px;line-height:15.96px;color:#242424;left:546.00px;letter-spacing:0.331px;">Katherine Requiz</span>
<span class="t" style="top:497.16px;font-size:13.3px;line-height:15.96px;color:#242424;left:682.00px;letter-spacing:0.280px;">26/2/2025, 12:00 a.m.</span>
<span class="t" style="top:497.16px;font-size:13.3px;line-height:15.96px;color:#242424;left:852.00px;letter-spacing:0.473px;">26/2/2025, 4:30 p.m.</span>
<span class="t" style="top:497.13px;font-size:12.8px;line-height:15.36px;color:#242424;right:231.20px;letter-spacing:-0.479px;">100%</span>
<div class="b" style="left:1px;top:571.90px;width:1631px;height:1px;background:#dfdfdf"></div>
<svg class="a" style="left:17.26px;top:543.70px;" width="7.7" height="12.1" viewBox="0 0 7.7 12.1"><circle cx="1.50" cy="1.50" r="1.4" fill="#0a0a0a"/><circle cx="6.20" cy="1.50" r="1.4" fill="#0a0a0a"/><circle cx="1.50" cy="6.05" r="1.4" fill="#0a0a0a"/><circle cx="6.20" cy="6.05" r="1.4" fill="#0a0a0a"/><circle cx="1.50" cy="10.60" r="1.4" fill="#0a0a0a"/><circle cx="6.20" cy="10.60" r="1.4" fill="#0a0a0a"/></svg>
<div class="b" style="left:125px;top:543.00px;width:16px;height:16px;border:2px solid #3884ff;border-radius:2px;background:#fff"></div>
<span class="t" style="top:542.16px;font-size:13.3px;line-height:15.96px;color:#242424;left:151.00px;letter-spacing:0.771px;">Publicaciones de cumpleaños</span>
<div class="b" style="left:523px;top:539.30px;width:22px;height:22px;border-radius:50%;box-shadow:0 0.5px 3px rgba(0,0,0,.3)"></div>
<svg class="a" style="left:523.00px;top:539.30px;" width="22" height="22" viewBox="0 0 22 22"><use href="#avatar"/></svg>
<span class="t" style="top:542.16px;font-size:13.3px;line-height:15.96px;color:#242424;left:546.00px;letter-spacing:0.331px;">Katherine Requiz</span>
<span class="t" style="top:542.16px;font-size:13.3px;line-height:15.96px;color:#242424;left:682.00px;letter-spacing:0.280px;">26/2/2025, 12:00 a.m.</span>
<span class="t" style="top:542.16px;font-size:13.3px;line-height:15.96px;color:#242424;left:852.00px;letter-spacing:0.473px;">26/2/2025, 8:00 a.m.</span>
<span class="t" style="top:542.13px;font-size:12.8px;line-height:15.36px;color:#242424;right:231.20px;letter-spacing:-0.479px;">100%</span>
<div class="b" style="left:1px;top:616.90px;width:1631px;height:1px;background:#dfdfdf"></div>
<svg class="a" style="left:17.26px;top:588.70px;" width="7.7" height="12.1" viewBox="0 0 7.7 12.1"><circle cx="1.50" cy="1.50" r="1.4" fill="#0a0a0a"/><circle cx="6.20" cy="1.50" r="1.4" fill="#0a0a0a"/><circle cx="1.50" cy="6.05" r="1.4" fill="#0a0a0a"/><circle cx="6.20" cy="6.05" r="1.4" fill="#0a0a0a"/><circle cx="1.50" cy="10.60" r="1.4" fill="#0a0a0a"/><circle cx="6.20" cy="10.60" r="1.4" fill="#0a0a0a"/></svg>
<div class="b" style="left:125px;top:588.00px;width:16px;height:16px;border:2px solid #3884ff;border-radius:2px;background:#fff"></div>
<span class="t" style="top:587.16px;font-size:13.3px;line-height:15.96px;color:#242424;left:151.00px;letter-spacing:0.540px;">Historias del día</span>
<div class="b" style="left:523px;top:584.30px;width:22px;height:22px;border-radius:50%;box-shadow:0 0.5px 3px rgba(0,0,0,.3)"></div>
<svg class="a" style="left:523.00px;top:584.30px;" width="22" height="22" viewBox="0 0 22 22"><use href="#avatar"/></svg>
<span class="t" style="top:587.16px;font-size:13.3px;line-height:15.96px;color:#242424;left:546.00px;letter-spacing:0.331px;">Katherine Requiz</span>
<span class="t" style="top:587.16px;font-size:13.3px;line-height:15.96px;color:#242424;left:682.00px;letter-spacing:0.280px;">26/2/2025, 12:00 a.m.</span>
<span class="t" style="top:587.16px;font-size:13.3px;line-height:15.96px;color:#242424;left:852.00px;letter-spacing:0.473px;">26/2/2025, 8:00 a.m.</span>
<span class="t" style="top:587.13px;font-size:12.8px;line-height:15.36px;color:#242424;right:231.20px;letter-spacing:-0.479px;">100%</span>
<div class="b" style="left:-1px;top:-1px;width:1633px;height:89px;background:#e0e0e0"></div>
<div class="b" style="left:0;top:44px;width:1631px;height:1px;background:#a8a8a8"></div>
<div class="b" style="left:-1px;top:88px;width:1633px;height:3px;background:#b5b5b5"></div>
<div class="b" style="left:76px;top:13px;width:16px;height:16px;border:2px solid #3884ff;border-radius:2px;background:#e0e0e0;box-shadow:0 0 0 1px #fff"></div>
<span class="t" style="top:12.32px;font-size:12.8px;line-height:15.36px;color:#5a5a5a;left:102.00px;font-weight:700;letter-spacing:1.323px;-webkit-text-stroke:0.4px #5a5a5a;">Tarea</span>
<span class="t" style="top:13.82px;font-size:12.8px;line-height:15.36px;color:#5a5a5a;left:521.00px;font-weight:700;letter-spacing:0.633px;-webkit-text-stroke:0.4px #5a5a5a;">Responsable</span>
<span class="t" style="top:13.82px;font-size:12.8px;line-height:15.36px;color:#5a5a5a;left:681.00px;font-weight:700;letter-spacing:0.586px;width:149px;overflow:hidden;-webkit-text-stroke:0.4px #5a5a5a;">Fecha de inicio estimada</span>
<span class="t" style="top:13.82px;font-size:12.8px;line-height:15.36px;color:#5a5a5a;left:851.00px;font-weight:700;letter-spacing:0.713px;-webkit-text-stroke:0.4px #5a5a5a;">Fecha de fin estimada</span>
<span class="t" style="top:13.82px;font-size:12.8px;line-height:15.36px;color:#5a5a5a;left:1085.00px;font-weight:700;letter-spacing:1.612px;-webkit-text-stroke:0.4px #5a5a5a;">Meta</span>
<span class="t" style="top:13.82px;font-size:12.8px;line-height:15.36px;color:#5a5a5a;left:1202.00px;font-weight:700;letter-spacing:0.311px;-webkit-text-stroke:0.4px #5a5a5a;">Logro</span>
<span class="t" style="top:13.82px;font-size:12.8px;line-height:15.36px;color:#5a5a5a;left:1261.00px;font-weight:700;letter-spacing:0.705px;width:138px;overflow:hidden;-webkit-text-stroke:0.4px #5a5a5a;">Cumpl. de tareas (%)</span>
<span class="t" style="top:13.82px;font-size:12.8px;line-height:15.36px;color:#5a5a5a;left:1421.00px;font-weight:700;letter-spacing:0.298px;width:129px;overflow:hidden;-webkit-text-stroke:0.4px #5a5a5a;">Cumpl. de Sub. Tareas</span>
<span class="t" style="top:13.82px;font-size:12.8px;line-height:15.36px;color:#5a5a5a;left:1572.00px;font-weight:700;letter-spacing:0.499px;-webkit-text-stroke:0.4px #5a5a5a;">Enlazamiento</span>
<svg class="a" style="left:47.80px;top:59.00px;" width="17" height="17" viewBox="0 0 24 24"><path d="M15.5 14h-.79l-.28-.27C15.41 12.59 16 11.11 16 9.5 16 5.91 13.09 3 9.5 3S3 5.910 3 9.5 5.91 16 9.5 16c1.61 0 3.09-.59 4.23-1.57l.27.28v.79l5 4.99L20.49 19l-4.99-5zm-6 0C7.01 14 5 11.99 5 9.5S7.01 5 9.5 5 14 7.01 14 9.5 11.990 14 9.500 14z" fill="#000"/></svg>
<svg class="a" style="left:677.80px;top:59.00px;" width="17" height="17" viewBox="0 0 24 24"><path d="M15.5 14h-.79l-.28-.27C15.41 12.59 16 11.11 16 9.5 16 5.91 13.09 3 9.5 3S3 5.910 3 9.5 5.91 16 9.5 16c1.61 0 3.09-.59 4.23-1.57l.27.28v.79l5 4.99L20.49 19l-4.99-5zm-6 0C7.01 14 5 11.99 5 9.5S7.01 5 9.5 5 14 7.01 14 9.5 11.990 14 9.500 14z" fill="#000"/></svg>
<svg class="a" style="left:847.80px;top:59.00px;" width="17" height="17" viewBox="0 0 24 24"><path d="M15.5 14h-.79l-.28-.27C15.41 12.59 16 11.11 16 9.5 16 5.91 13.09 3 9.5 3S3 5.910 3 9.5 5.91 16 9.5 16c1.61 0 3.09-.59 4.23-1.57l.27.28v.79l5 4.99L20.49 19l-4.99-5zm-6 0C7.01 14 5 11.99 5 9.5S7.01 5 9.5 5 14 7.01 14 9.5 11.990 14 9.500 14z" fill="#000"/></svg>
<svg class="a" style="left:1017.80px;top:59.00px;" width="17" height="17" viewBox="0 0 24 24"><path d="M15.5 14h-.79l-.28-.27C15.41 12.59 16 11.11 16 9.5 16 5.91 13.09 3 9.5 3S3 5.910 3 9.5 5.91 16 9.5 16c1.61 0 3.09-.59 4.23-1.57l.27.28v.79l5 4.99L20.49 19l-4.99-5zm-6 0C7.01 14 5 11.99 5 9.5S7.01 5 9.5 5 14 7.01 14 9.5 11.990 14 9.500 14z" fill="#000"/></svg>
<svg class="a" style="left:1137.80px;top:59.00px;" width="17" height="17" viewBox="0 0 24 24"><path d="M15.5 14h-.79l-.28-.27C15.41 12.59 16 11.11 16 9.5 16 5.91 13.09 3 9.5 3S3 5.910 3 9.5 5.91 16 9.5 16c1.61 0 3.09-.59 4.23-1.57l.27.28v.79l5 4.99L20.49 19l-4.99-5zm-6 0C7.01 14 5 11.99 5 9.5S7.01 5 9.5 5 14 7.01 14 9.5 11.990 14 9.500 14z" fill="#000"/></svg>
<svg class="a" style="left:1257.80px;top:59.00px;" width="17" height="17" viewBox="0 0 24 24"><path d="M15.5 14h-.79l-.28-.27C15.41 12.59 16 11.11 16 9.5 16 5.91 13.09 3 9.5 3S3 5.910 3 9.5 5.91 16 9.5 16c1.61 0 3.09-.59 4.23-1.57l.27.28v.79l5 4.99L20.49 19l-4.99-5zm-6 0C7.01 14 5 11.99 5 9.5S7.01 5 9.5 5 14 7.01 14 9.5 11.990 14 9.500 14z" fill="#000"/></svg>
<svg class="a" style="left:1417.80px;top:59.00px;" width="17" height="17" viewBox="0 0 24 24"><path d="M15.5 14h-.79l-.28-.27C15.41 12.59 16 11.11 16 9.5 16 5.91 13.09 3 9.5 3S3 5.910 3 9.5 5.91 16 9.5 16c1.61 0 3.09-.59 4.23-1.57l.27.28v.79l5 4.99L20.49 19l-4.99-5zm-6 0C7.01 14 5 11.99 5 9.5S7.01 5 9.5 5 14 7.01 14 9.5 11.990 14 9.500 14z" fill="#000"/></svg>
<svg class="a" style="left:1568.80px;top:59.00px;" width="17" height="17" viewBox="0 0 24 24"><path d="M15.5 14h-.79l-.28-.27C15.41 12.59 16 11.11 16 9.5 16 5.91 13.09 3 9.5 3S3 5.910 3 9.5 5.91 16 9.5 16c1.61 0 3.09-.59 4.23-1.57l.27.28v.79l5 4.99L20.49 19l-4.99-5zm-6 0C7.01 14 5 11.99 5 9.5S7.01 5 9.5 5 14 7.01 14 9.5 11.990 14 9.500 14z" fill="#000"/></svg>
<span class="t" style="top:57.82px;font-size:13.3px;line-height:15.96px;color:#1e1e1e;left:521.00px;letter-spacing:0.840px;">(All)</span>
<div class="b" style="left:628px;top:58px;width:16px;height:16px;border-radius:50%;background:#c8c8c8"></div>
<svg class="a" style="left:631.50px;top:61.50px;" width="9" height="9" viewBox="0 0 9 9"><path d="M1 1 L8 8 M8 1 L1 8" stroke="#888" stroke-width="1.1"/></svg>
<svg class="a" style="left:654.00px;top:64.50px;" width="8" height="4" viewBox="0 0 8 4"><path d="M0 0 h8 l-4 4 z" fill="#222"/></svg>
<svg class="a" style="left:820.00px;top:57.50px;" width="16" height="17" viewBox="1 0 22 24"><path d="M20 3h-1V1h-2v2H7V1H5v2H4c-1.1 0-2 .9-2 2v16c0 1.1.9 2 2 2h16c1.100 0 2-.9 2-2V5c0-1.1-.9-2-2-2zm0 18H4V8h16v13z" fill="#000"/></svg>
<svg class="a" style="left:990.00px;top:57.50px;" width="16" height="17" viewBox="1 0 22 24"><path d="M20 3h-1V1h-2v2H7V1H5v2H4c-1.1 0-2 .9-2 2v16c0 1.1.9 2 2 2h16c1.100 0 2-.9 2-2V5c0-1.1-.9-2-2-2zm0 18H4V8h16v13z" fill="#000"/></svg>
<div class="b" style="left:1626px;top:126px;width:5px;height:170px;background:#cfcfcf"></div>
<div class="b" style="left:0;top:615.2px;width:1467px;height:4.5px;background:#c8c8c8"></div>
</div>
</body></html>
